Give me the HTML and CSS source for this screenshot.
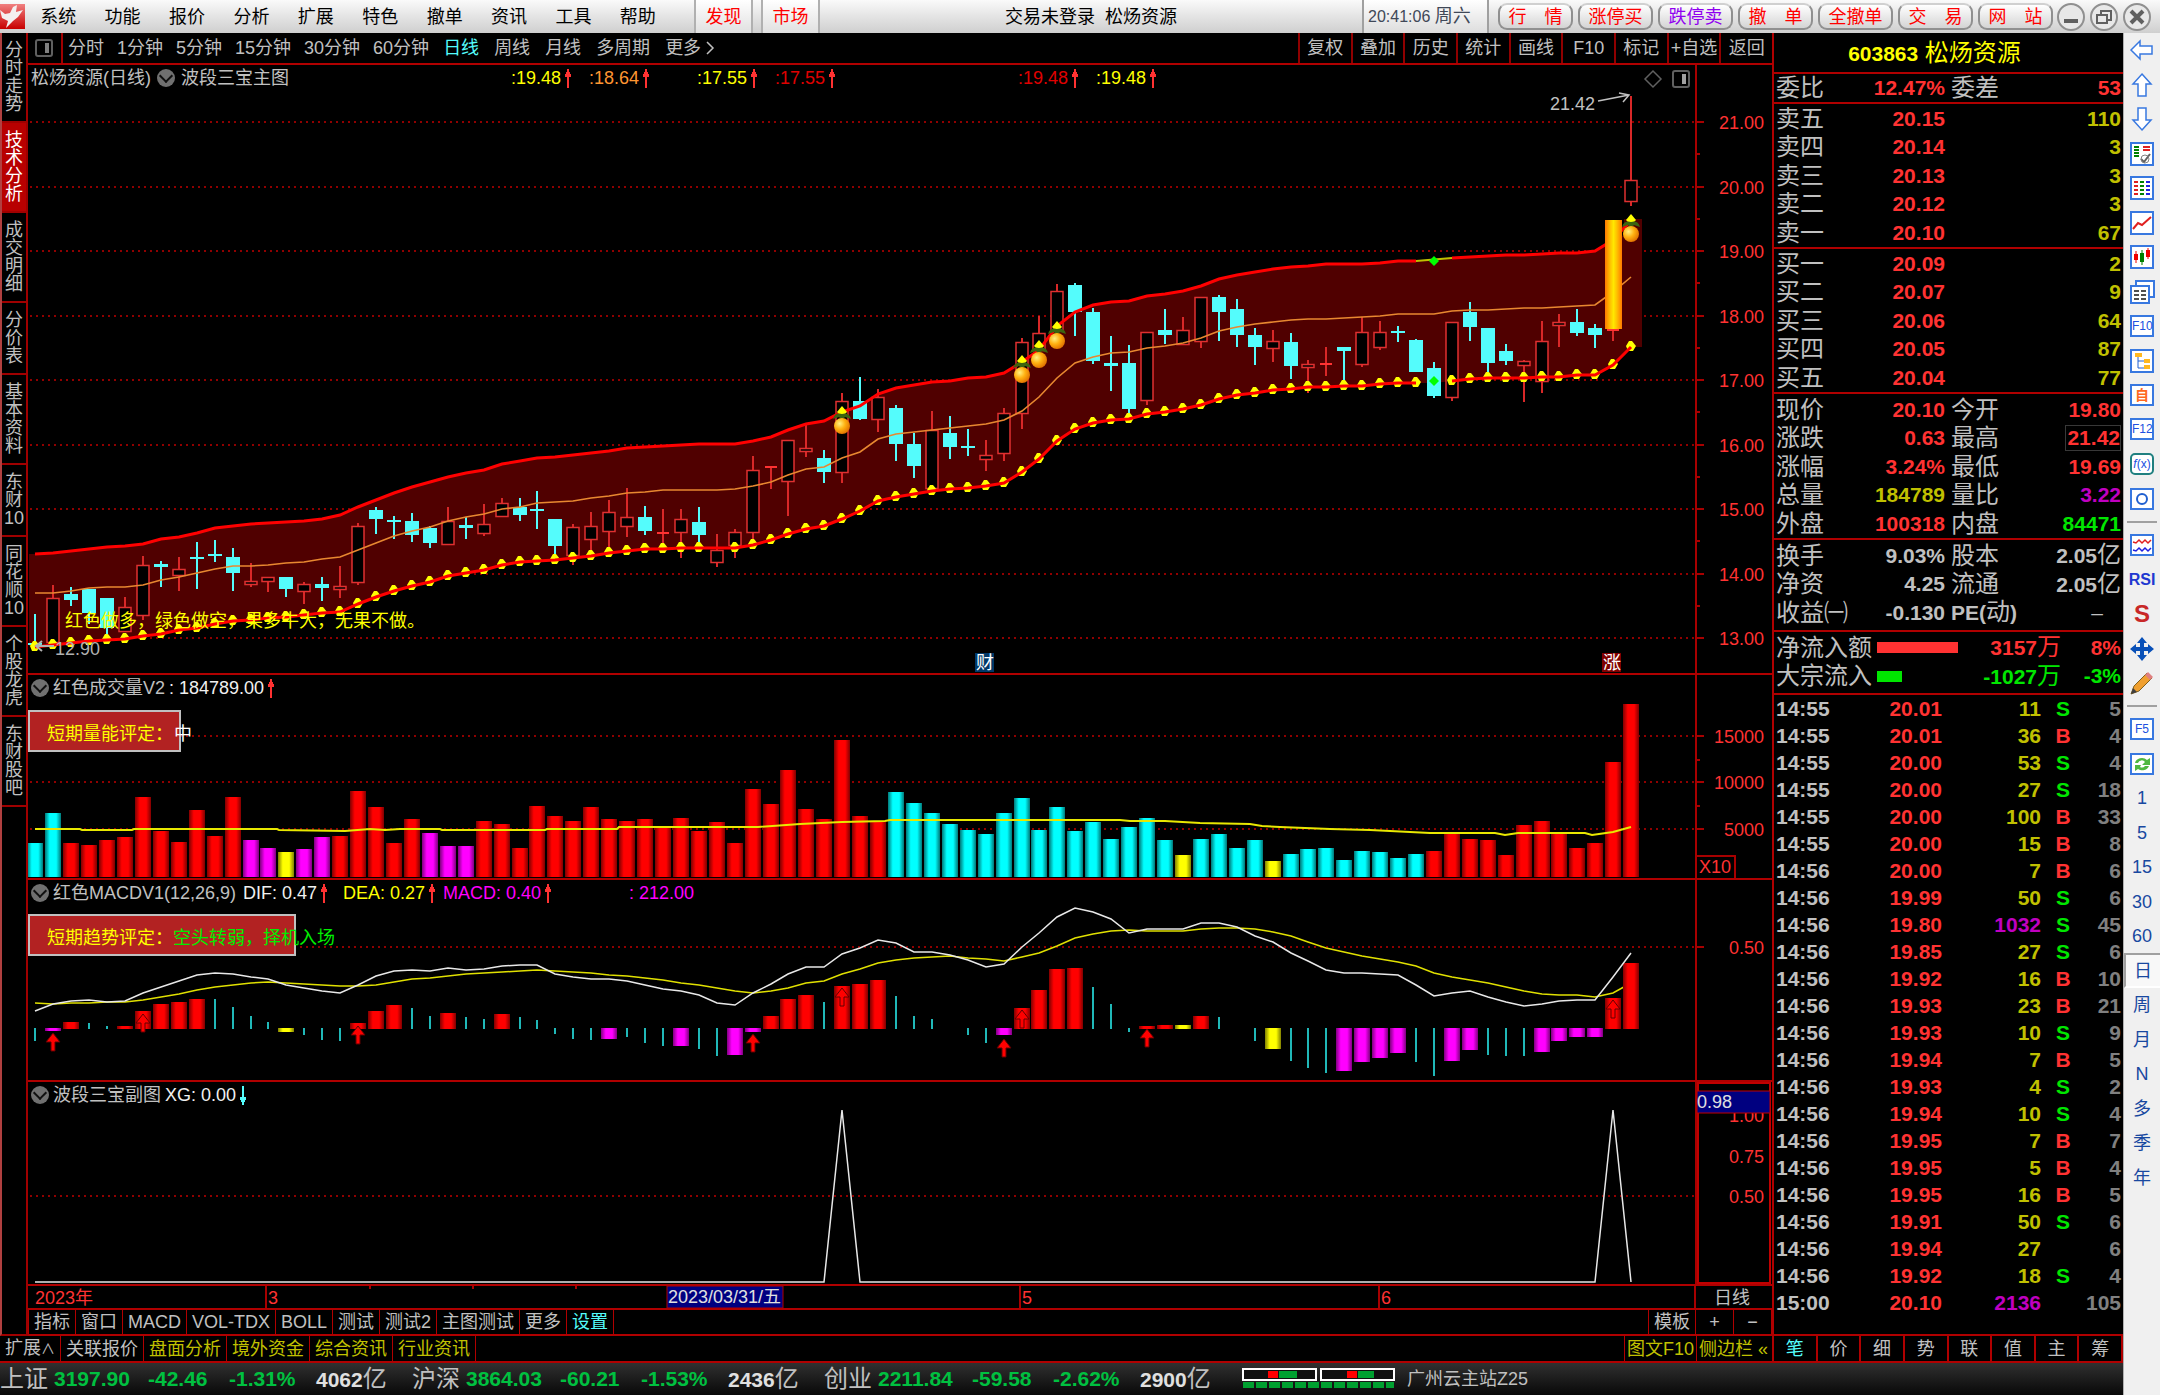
FILE: index.html
```html
<!DOCTYPE html>
<html lang="zh-CN">
<head>
<meta charset="utf-8">
<title>松炀资源 603863</title>
<link rel="stylesheet" href="styles.css">
</head>
<body>
<header class="titlebar">
  <svg class="logo" viewBox="0 0 25 25"><defs><linearGradient id="lg" x1="0" y1="0" x2="0" y2="1"><stop offset="0" stop-color="#f08080"/><stop offset="1" stop-color="#c80000"/></linearGradient></defs><rect width="25" height="25" fill="url(#lg)"/><path d="M0 6 L5 10 L10 9 L13 3 L17 1 L16 8 L23 6 L18 13 L13 17 L6 24 L8 17 L2 14 Z" fill="#f4f0f0"/></svg>
  <nav class="menu">
    <button>系统</button><button>功能</button><button>报价</button><button>分析</button><button>扩展</button><button>特色</button><button>撤单</button><button>资讯</button><button>工具</button><button>帮助</button>
  </nav>
  <div class="hot"><button>发现</button><button>市场</button></div>
  <div class="caption">交易未登录&nbsp; 松炀资源</div>
  <div class="clock">20:41:06 <span>周六</span></div>
  <div class="pills">
    <button>行&emsp;情</button><button>涨停买</button><button class="violet">跌停卖</button><button>撤&emsp;单</button><button>全撤单</button><button>交&emsp;易</button><button>网&emsp;站</button>
  </div>
  <div class="winctl">
    <button aria-label="最小化"><svg viewBox="0 0 30 30"><circle cx="15" cy="15" r="13"/><path d="M8 19H22" stroke-width="4"/></svg></button>
    <button aria-label="还原"><svg viewBox="0 0 30 30"><circle cx="15" cy="15" r="13"/><path d="M12 12V9H22V18H19M8 13H18V21H8Z" stroke-width="2"/></svg></button>
    <button aria-label="关闭"><svg viewBox="0 0 30 30"><circle cx="15" cy="15" r="13"/><path d="M9 9L21 21M21 9L9 21" stroke-width="4"/></svg></button>
  </div>
</header>
<main class="work">
  <nav class="side">
    <button>分时走势</button><button class="on">技术分析</button><button>成交明细</button><button>分价表</button><button>基本资料</button><button>东财<br>10</button><button>同花顺<br>10</button><button>个股龙虎</button><button>东财股吧</button>
  </nav>
  <section class="chart">
    <div class="periods">
      <button class="split" aria-label="布局"><svg width="18" height="18" viewBox="0 0 18 18"><rect x="1" y="1" width="16" height="16" rx="2" fill="none" stroke="#606060" stroke-width="2"/><rect x="10" y="4" width="4" height="10" fill="#808080"/></svg></button>
      <div class="pgroup"><button>分时</button><button>1分钟</button><button>5分钟</button><button>15分钟</button><button>30分钟</button><button>60分钟</button></div>
      <div class="pgroup wide"><button class="cyan">日线</button><button>周线</button><button>月线</button><button>多周期</button><button>更多<svg class="chev" width="10" height="16" viewBox="0 0 10 16"><path d="M2 2L8 8L2 14" fill="none" stroke="#c0c0c0" stroke-width="1.5"/></svg></button></div>
      <div class="ptools"><button>复权</button><button>叠加</button><button>历史</button><button>统计</button><button>画线</button><button>F10</button><button>标记</button><button>+自选</button><button>返回</button></div>
    </div>
    <div class="panel">
      <svg id="main" viewBox="28 65 1744 608"></svg>
      <div class="legend head">
        <span>松炀资源(日线)</span><i class="drop"></i><span class="name">波段三宝主图</span>
        <span class="val yellow">:19.48<b class="up"></b></span><span class="val orange">:18.64<b class="up"></b></span>
        <span class="val yellow s">:17.55<b class="up"></b></span><span class="val dred">:17.55<b class="up"></b></span>
        <span class="val dred l">:19.48<b class="up"></b></span><span class="val yellow">:19.48<b class="up"></b></span>
      </div>
    </div>
    <div class="panel">
      <svg id="vol" viewBox="28 675 1744 203"></svg>
      <div class="legend"><i class="drop"></i><span>红色成交量V2</span><span class="white">: 184789.00<b class="up"></b></span></div>
    </div>
    <div class="panel">
      <svg id="macd" viewBox="28 880 1744 200"></svg>
      <div class="legend"><i class="drop"></i><span class="m1">红色MACDV1(12,26,9)</span><span class="m2 white">DIF: 0.47<b class="up"></b></span><span class="m2 yellow">DEA: 0.27<b class="up"></b></span><span class="m3 magenta">MACD: 0.40<b class="up"></b></span><span class="magenta">: 212.00</span></div>
    </div>
    <div class="panel">
      <svg id="xg" viewBox="28 1082 1744 202"></svg>
      <div class="legend"><i class="drop"></i><span>波段三宝副图</span><span class="white">XG: 0.00<b class="down"></b></span></div>
    </div>
    <div class="panel"><svg id="time" viewBox="28 1286 1744 22"></svg></div>
    <div class="inds">
      <button>指标</button><button>窗口</button><button>MACD</button><button>VOL-TDX</button><button>BOLL</button><button>测试</button><button>测试2</button><button>主图测试</button><button>更多</button><button class="cyan">设置</button>
      <span class="fill"></span><button class="tpl">模板</button><button class="pm">+</button><button class="pm">−</button>
    </div>
  </section>
  <div class="ext">
    <button>扩展<small>∧</small></button><button>关联报价</button><button class="oly">盘面分析</button><button class="oly">境外资金</button><button class="oly">综合资讯</button><button class="oly">行业资讯</button>
    <span class="fill"></span><button class="oly bare">图文F10</button><button class="oly last">侧边栏 «</button>
  </div>
  <aside class="quote">
    <h1><b>603863</b> 松炀资源</h1>
    <table class="q one"><colgroup><col class="c1"><col class="c2"><col class="c3"><col></colgroup><tr><th>委比</th><td class="r">12.47%</td><th>委差</th><td class="r">53</td></tr></table>
    <table class="q" id="asks"></table>
    <table class="q" id="bids"></table>
    <table class="q facts"><colgroup><col class="c1"><col class="c2"><col class="c3"><col></colgroup>
      <tr><th>现价</th><td class="r">20.10</td><th>今开</th><td class="r">19.80</td></tr>
      <tr><th>涨跌</th><td class="r">0.63</td><th>最高</th><td class="r"><span class="boxed">21.42</span></td></tr>
      <tr><th>涨幅</th><td class="r">3.24%</td><th>最低</th><td class="r">19.69</td></tr>
      <tr><th>总量</th><td class="y">184789</td><th>量比</th><td class="m">3.22</td></tr>
      <tr><th>外盘</th><td class="r">100318</th><th>内盘</th><td class="g">84471</td></tr></table>
    <table class="q shares"><colgroup><col class="c1"><col class="c2"><col class="c3"><col></colgroup>
      <tr><th>换手</th><td>9.03%</td><th>股本</th><td>2.05<span>亿</span></td></tr>
      <tr><th>净资</th><td>4.25</td><th>流通</th><td>2.05<span>亿</span></td></tr>
      <tr><th>收益㈠</th><td>-0.130</td><th><b>PE(</b>动<b>)</b></th><td class="dash">–</td></tr></table>
    <table class="q flow"><colgroup><col class="f1"><col class="f2"><col class="f3"><col></colgroup>
      <tr><th>净流入额</th><td><i class="bar in" style="width:81px"></i></td><td class="r">3157<span>万</span></td><td class="r">8%</td></tr>
      <tr><th>大宗流入</th><td><i class="bar out" style="width:25px"></i></td><td class="g">-1027<span>万</span></td><td class="g">-3%</td></tr></table>
    <table class="ticks" id="ticks"></table>
    <div class="qtabs"><button class="cyan">笔</button><button>价</button><button>细</button><button>势</button><button>联</button><button>值</button><button>主</button><button>筹</button></div>
  </aside>
  <nav class="tools">
    <div class="tgroup">
      <button aria-label="后退"><svg viewBox="0 0 26 26"><path d="M2 13L11 4V9H23V17H11V22Z" class="ol"/></svg></button>
      <button aria-label="上"><svg viewBox="0 0 26 26"><path d="M13 2L22 12H17V24H9V12H4Z" class="ol"/></svg></button>
      <button aria-label="下"><svg viewBox="0 0 26 26"><path d="M13 24L22 14H17V2H9V14H4Z" class="ol"/></svg></button>
      <button aria-label="选股"><svg viewBox="0 0 26 26"><rect class="fr" x="2" y="2" width="22" height="22"/><path d="M5 6H10M5 9H10M5 12H10M5 15H10" stroke="#008000" stroke-width="2"/><path d="M14 6H21M14 9H21" stroke="#e02020" stroke-width="2"/><path d="M12 18L15 21L21 13" stroke="#606060" stroke-width="2" fill="none"/><circle cx="16" cy="18" r="4" fill="none" stroke="#808080"/></svg></button>
      <button aria-label="报价"><svg viewBox="0 0 26 26"><rect class="fr" x="2" y="2" width="22" height="22"/><path d="M5 7H9M5 11H9M5 15H9M5 19H9" stroke="#e02020" stroke-width="2"/><path d="M11 7H15M11 11H15M11 15H15M11 19H15" stroke="#008000" stroke-width="2"/><path d="M17 7H21M17 11H21M17 15H21M17 19H21" stroke="#2020e0" stroke-width="2"/></svg></button>
      <button aria-label="走势"><svg viewBox="0 0 26 26"><rect class="fr" x="2" y="2" width="22" height="22"/><path d="M4 19L9 13L13 15L22 7" stroke="#e02020" stroke-width="2" fill="none"/></svg></button>
      <button aria-label="K线"><svg viewBox="0 0 26 26"><rect class="fr" x="2" y="2" width="22" height="22"/><path d="M7 7V19M19 4V15" stroke="#f00000"/><path d="M13 6V21" stroke="#008000"/><rect x="5" y="10" width="4" height="6" fill="#f00000"/><rect x="11" y="9" width="4" height="9" fill="#008000"/><rect x="17" y="6" width="4" height="7" fill="#f00000"/></svg></button>
      <button aria-label="多窗"><svg viewBox="0 0 26 26"><rect class="fr" x="7" y="2" width="18" height="16"/><rect class="fr" x="2" y="7" width="18" height="17"/><path d="M5 12H10M5 16H10M5 20H10M12 12H17M12 16H17M12 20H17" stroke="#505050" stroke-width="2"/></svg></button>
      <button class="frame">F10</button>
      <button aria-label="结构"><svg viewBox="0 0 26 26"><rect class="fr" x="2" y="2" width="22" height="22"/><path d="M9 8V20H16M9 13H16" stroke="#2060d0" fill="none"/><rect x="6" y="5" width="7" height="4" fill="#ffb820"/><rect x="15" y="11" width="6" height="4" fill="#ffb820"/><rect x="15" y="17" width="6" height="4" fill="#ffb820"/></svg></button>
      <button class="frame orange2">自</button>
      <button class="frame">F12</button>
      <button class="frame fx"><i>f</i>(x)</button>
      <button aria-label="圈"><svg viewBox="0 0 26 26"><rect class="fr" x="2" y="3" width="22" height="20"/><circle cx="13" cy="13" r="5" fill="none" stroke="#2060d0" stroke-width="2"/></svg></button>
    </div>
    <hr>
    <div class="tgroup">
      <button aria-label="曲线"><svg viewBox="0 0 26 26"><rect class="fr" x="2" y="3" width="22" height="20"/><path d="M4 10L7 11L10 8L13 11L16 8L19 11L22 8" stroke="#e02020" fill="none" stroke-width="1.5"/><path d="M4 18L7 19L10 16L13 19L16 16L19 19L22 16" stroke="#2020e0" fill="none" stroke-width="1.5"/></svg></button>
      <button class="rsi">RSI</button>
      <button class="ess">S</button>
      <button aria-label="移动"><svg viewBox="0 0 26 26"><path d="M13 1L18 7H15V11H19V8L25 13L19 18V15H15V19H18L13 25L8 19H11V15H7V18L1 13L7 8V11H11V7H8Z" fill="#0850b8"/></svg></button>
      <button aria-label="画笔"><svg viewBox="0 0 26 26"><path d="M2 24L5 16L18 3L23 8L10 21Z" fill="#f0a030" stroke="#806020"/><path d="M16 5L21 10L24 7L19 2Z" fill="#e08080"/><path d="M2 24L4 18L8 22Z" fill="#404040"/></svg></button>
    </div>
    <hr>
    <div class="tgroup">
      <button class="frame">F5</button>
      <button aria-label="刷新"><svg viewBox="0 0 26 26"><rect class="fr" x="2" y="3" width="22" height="20"/><path d="M6 12A7 6 0 0 1 18 9L21 7V14H13L16 11A4 4 0 0 0 9 12Z M20 15A7 6 0 0 1 9 18L6 20V14H12L11 16A4 4 0 0 0 16 15Z" fill="#50b840"/></svg></button>
      <button>1</button><button>5</button><button>15</button><button>30</button><button>60</button><button class="press">日</button><button>周</button><button>月</button><button>N</button><button>多</button><button>季</button><button>年</button>
    </div>
  </nav>
  <footer class="status" id="status"></footer>
</main>
<script src="app.js"></script>
</body>
</html>
```
FILE: styles.css
```css
*{box-sizing:border-box}
body{margin:0;min-height:100vh;display:flex;flex-direction:column;background:#000;color:#c0c0c0;font:18px/20px "Liberation Sans","Noto Sans CJK SC",sans-serif}
button{margin:0;padding:0;border:0;background:none;color:inherit;font:inherit;white-space:nowrap}
svg{display:block}
.cyan{color:#54fcfc}.yellow{color:#ff0}.orange{color:#ff9632}.dred{color:#e00000}.white{color:#f0f0f0}.magenta{color:#f0f}.oly{color:#c0c000}
.titlebar{height:33px;display:flex;align-items:center;color:#000;background:linear-gradient(#fafafa,#e4e4e4 50%,#cfcfcf)}
.logo{width:25px;height:25px;margin-right:1px}
.menu{display:flex;width:644px;margin-right:24px}
.menu button{flex:1}
.hot{display:flex;gap:8px;height:33px}
.hot button{width:59px;color:#f00;border-left:2px solid #b0b0b0;border-right:2px solid #b0b0b0;background:linear-gradient(#fff,#e0e0e0)}
.caption{flex:1;text-align:center}
.clock{width:127px;height:33px;padding-left:4px;line-height:33px;font-size:16px;color:#404858;border-left:2px solid #a0a0a0;border-right:2px solid #a0a0a0;background:linear-gradient(#fff,#ddd)}
.clock span{font-size:18px}
.pills{display:flex;gap:5px;margin-left:9px}
.pills button{width:75px;height:27px;border-radius:9px;border:2px solid #909090;border-top-color:#d0d0d0;color:#f00;line-height:22px;background:linear-gradient(#fff,#d4d4d4)}
.pills .violet{color:#9000f0}
.winctl{display:flex;gap:3px;margin:0 8px 0 3px}
.winctl svg{width:30px;height:30px;fill:#e8e8e8;stroke:#606060}
.winctl circle{stroke:#909090;stroke-width:2}
.work{flex:1;display:grid;grid-template-columns:28px 1fr 351px 37px;grid-template-rows:auto auto 1fr;grid-template-areas:"side chart quote tools" "ext ext quote tools" "status status status tools"}
.side{grid-area:side;display:flex;flex-direction:column;border-left:2px solid #b04040;border-right:2px solid #a00000;border-bottom:2px solid #a00000}
.side button{padding:8px 2px;border-bottom:2px solid #a00000;line-height:18px;white-space:normal}
.side .on{background:#b80000;color:#fff}
.chart{grid-area:chart;min-width:0}
.periods{display:flex;height:32px;border-bottom:2px solid #b00000}
.split{width:35px;padding-left:7px;border-right:2px solid #a00000}
.pgroup{display:flex;gap:13px;padding-left:5px}
.pgroup.wide{gap:15px;padding-left:14px}
.chev{display:inline-block;vertical-align:-2px;margin-left:4px}
.ptools{display:flex;width:474px;margin-left:auto}
.ptools button{flex:1;width:0;min-width:0;display:flex;align-items:center;justify-content:center;border-left:2px solid #900000}
.panel{position:relative;border-bottom:2px solid #b00000}
.panel svg{width:100%;height:auto}
.legend{position:absolute;left:3px;top:2px;display:flex;align-items:center;gap:4px;height:22px;white-space:nowrap}
.legend.head{gap:6px}
.drop{width:18px;height:18px;border-radius:50%;background:#707070;display:grid;place-items:center}
.drop::after{content:"";width:8px;height:8px;margin-top:-4px;border:solid #101010;border-width:0 2px 2px 0;transform:rotate(45deg)}
.name{width:324px}
.val{width:72px}
.val.s{margin-left:30px}.val.l{margin-left:165px}
.up,.down{display:inline-block;width:8px;height:19px;margin-left:3px;vertical-align:-4px;background:linear-gradient(#ff3232,#ff3232) center/2px 100% no-repeat,conic-gradient(from 155deg at 50% 0,#ff3232 50deg,transparent 0) top/8px 8px no-repeat}
.down{background:linear-gradient(#54fcfc,#54fcfc) center/2px 100% no-repeat,conic-gradient(from -25deg at 50% 100%,#54fcfc 50deg,transparent 0) bottom/8px 8px no-repeat}
.m1{width:186px}.m2{width:96px}.m3{width:182px}
.inds,.ext{display:flex;height:26px;border-bottom:2px solid #b00000}
.ext{grid-area:ext;height:27px}
.ext small{font-size:14px}
.inds button,.ext button{padding:0 5px;border-right:1px solid #b00000}
.inds button:first-child{border-left:1px solid #b00000}
.fill{flex:1}
.inds .tpl{border-left:1px solid #b00000}
.inds .pm{width:38px}
.ext .bare{border-left:1px solid #b00000;padding:0 2px}
.ext .last{border:0;padding:0 0 0 2px;width:75px;text-align:left}
.quote{grid-area:quote;display:flex;flex-direction:column;border-left:2px solid #b00000}
.quote h1{margin:0;height:39px;padding-right:28px;line-height:39px;text-align:center;font-size:24px;font-weight:400;color:#ff0}
.quote h1 b{font-size:21px}
.q{width:100%;table-layout:fixed;border-collapse:separate;border-spacing:0;border-top:2px solid #b00000}
.q td,.q th{padding:0;height:29px;line-height:26px;white-space:nowrap}
.q tr:nth-child(even) td,.q tr:nth-child(even) th,.q.one td{height:28px}
.q.one th{height:28px}
.q th{padding-left:2px;text-align:left;font-size:24px;font-weight:400}
.q th+td+th{padding-left:6px}
.q th b{font-size:21px}
.q td{text-align:right;font-size:21px;font-weight:700}
.q td:last-child{padding-right:2px}
.q td span{font-size:24px;font-weight:400}
.q td span.boxed{display:block;margin-left:40px;border:1px solid #383838;font-size:21px;font-weight:700;line-height:24px}
.facts{padding-top:1px}
.shares{padding:1px 0 3px}
.c1{width:96px}.c2{width:75px}.c3{width:80px}
.f1{width:103px}.f2{width:82px}.f3{width:102px}
.r{color:#ff3232}.y{color:#c0c000}.g{color:#00e600}.m{color:#c000c0}.w{color:#808080}
.q td.dash{padding-right:20px;font-weight:400}
.bar{display:block;height:11px}
.in{background:#ff3232}.out{background:#00e600}
.flow{padding:1px 0 3px}
.ticks{width:100%;table-layout:fixed;border-collapse:separate;border-spacing:0;border-top:2px solid #b00000;font-size:21px;font-weight:700}
.ticks td{padding:0;height:27px;line-height:25px;text-align:right}
.ticks td:first-child{padding-left:2px;text-align:left}
.ticks td:nth-child(4){text-align:center}
.ticks td:last-child{padding-right:2px}
.qtabs{display:flex;height:29px;margin-top:auto;border-top:2px solid #b00000;border-bottom:2px solid #b00000}
.qtabs button{flex:1;border-right:2px solid #b00000}
.tools{grid-area:tools;background:#f0f0f0;color:#1848a0;border-left:1px solid #b0b0b0}
.tools hr{margin:5px 3px;border:0;border-top:2px solid #a0a0a0}
.tgroup{display:flex;flex-direction:column;align-items:center}
.tgroup button{width:36px;height:34px;display:grid;place-items:center}
.tgroup button:nth-child(even){height:35px}
.tgroup svg{width:26px;height:26px}
.ol{fill:#fff;stroke:#3878e0;stroke-width:1.5}
.fr{fill:#fff;stroke:#3878e0;stroke-width:2}
.tgroup .frame{width:24px;height:22px;margin:6px 0;border:2px solid #3878e0;background:#fff;font-size:12px;color:#2050e0;line-height:18px}
.tgroup .frame:nth-child(even){height:22px;margin:6px 0 7px}
.tgroup .orange2{color:#ff6820;font-size:14px;font-weight:700}
.tgroup .fx{border-color:#208080;border-radius:5px;display:flex;justify-content:center}
.tgroup .rsi{font-size:16px;font-weight:700;color:#2038d0}
.tgroup .ess{font-size:24px;font-weight:700;color:#c82828}
.tgroup .press{border:2px solid #a0a0a0;border-right:0;border-bottom-color:#fff;background:#f8f8f8}
.status{grid-area:status;display:flex;align-items:center;height:32px;background:linear-gradient(#303030,#080808);font-size:21px;font-weight:700;white-space:nowrap}
.status .n{width:54px;font-size:24px;font-weight:400}
.status .i{width:94px}.status .c{width:81px}.status .p{width:87px}.status .a{width:96px;color:#e0e0e0}
.status .a span{font-size:24px;font-weight:400;color:#c0c0c0}
.status .up2{color:#00c040}
.status .host{margin-left:12px;font-size:18px;font-weight:400}
.status svg{margin-left:6px}
text{font-size:18px}
.ax{fill:#ff3232;text-anchor:end}
```
FILE: app.js
```javascript
const X = i => Math.round(35.4 + 17.93 * i);
const at = (y, list) => list.map((v, i) => X(i) + ',' + (v + y)).join(' ');
const rect = (x, y, w, h, a) => `<rect x="${x}" y="${y}" width="${w}" height="${h}" ${a}/>`;
const line = (x1, y1, x2, y2, a) => `<path d="M${x1} ${y1}L${x2} ${y2}" ${a}/>`;
const grid = ys => ys.map(y => line(30, y, 1695, y, 'stroke="#900000" stroke-width="2" stroke-dasharray="2 4" fill="none"')).join('');
const axis = (top, h) => rect(1695, top, 2, h, 'fill="#a80000"');
const tick = (y, w) => rect(1697, y - 1, w, 2, 'fill="#a80000"');
const label = (y, s) => `<text x="1764" y="${y + 7}" class="ax">${s}</text>`;

// Candles: kind, high, body top, body bottom, low
const K = `c 614 643 645 645|r 585 598 642 642|c 587 594 600 606|c 589 589 613 624|c 598 598 628 637|r 597 607 631 631|r 556 565 615 620|c 561 564 567 587|r 557 569 575 591|c 542 557 558 589|c 540 554 556 562|c 548 557 573 591|r 563 581 584 587|r 577 577 581 592|c 577 577 589 597|r 582 584 591 604|c 577 584 588 601|r 566 586 589 598|r 523 526 582 585|c 507 510 519 534|c 516 520 521 539|c 513 521 535 542|c 526 528 543 548|r 507 521 544 544|c 517 525 528 539|r 504 524 533 536|r 498 503 516 517|c 498 507 515 521|c 491 509 510 529|c 519 519 546 557|r 524 527 555 565|r 512 526 539 552|r 500 512 531 550|r 488 517 526 537|c 506 517 531 535|r 509 532 532 547|r 509 519 532 558|c 507 522 535 545|r 534 550 562 567|r 529 532 545 558|r 456 470 532 549|r 466 466 466 489|r 440 440 481 516|r 425 448 451 457|c 450 458 472 483|r 393 401 472 483|c 377 401 419 420|r 389 397 419 432|c 405 408 444 461|c 433 444 466 478|r 411 430 488 488|c 416 433 447 459|c 429 446 447 456|r 440 455 459 471|r 408 413 453 461|r 338 342 413 429|r 316 333 350 352|r 284 291 330 335|c 283 285 312 336|c 308 312 361 364|c 336 363 366 391|c 345 363 409 413|r 332 332 400 405|c 309 330 335 344|r 317 330 344 345|r 297 297 341 348|c 295 297 312 341|c 299 309 335 347|c 328 335 347 365|r 330 341 348 362|c 333 342 366 379|r 360 364 367 393|r 347 363 363 376|c 347 347 351 384|r 317 332 364 367|r 321 332 347 350|c 326 331 332 342|c 339 340 372 372|c 362 368 396 398|r 322 322 397 401|c 302 312 327 341|c 328 328 363 373|c 344 351 361 365|r 360 361 365 402|r 321 341 381 393|r 314 322 325 347|c 309 322 333 336|c 324 328 335 348|r 322 329 329 341|r 96 180 201 206`.split('|').map(s => s.split(' '));
const LOW = [645,643,641,639,638,637,634,632,628,626,622,619,618,616,615,613,611,610,602,595,589,584,580,574,571,568,563,560,559,558,556,554,551,549,547,547,546,546,546,546,543,538,532,527,524,517,509,499,495,492,489,487,486,484,481,470,457,439,427,421,418,417,412,410,407,403,397,393,391,388,387,385,385,384,384,382,381,381,381,379,377,376,376,376,375,375,373,373,363,345];
const UP = [554,553,551,549,547,546,544,539,537,533,528,526,524,523,522,521,519,515,507,500,493,487,482,477,473,470,464,461,458,457,455,453,451,448,447,446,445,444,444,444,441,437,430,424,421,412,406,394,388,385,382,381,378,377,373,362,350,326,312,305,302,301,296,294,291,286,279,275,272,269,267,266,264,264,264,263,261,261,261,258,257,256,255,255,254,253,253,251,240,220];
const MID = [593,593,591,588,587,587,585,580,577,573,569,566,566,565,563,562,559,557,550,543,536,531,527,521,517,514,509,507,503,502,501,498,496,493,492,490,490,490,490,489,486,482,475,469,467,458,452,439,434,432,430,428,426,424,420,411,397,378,363,357,353,352,348,346,343,338,331,327,324,322,320,319,319,318,317,316,314,314,314,311,310,310,309,308,308,307,306,305,292,277];

function drawMain() {
  let s = `<defs><linearGradient id="gold"><stop offset="0" stop-color="#ff7800"/><stop offset=".3" stop-color="#ffc000"/><stop offset=".5" stop-color="#ffe800"/><stop offset=".7" stop-color="#ffc000"/><stop offset="1" stop-color="#ff7800"/></linearGradient>
  <radialGradient id="org" cx=".35" cy=".35" r=".7"><stop offset="0" stop-color="#fff080"/><stop offset=".5" stop-color="#ffb010"/><stop offset="1" stop-color="#e07000"/></radialGradient>
  <g id="fruit"><path d="M-5 -14L0 -20L5 -14L3 -12H-3Z" fill="#ff0"/><path d="M-9 -7Q-7 -14 0 -12Q7 -14 9 -7L3 -9L0 -6L-3 -9Z" fill="#3c6410"/><circle r="8" fill="url(#org)"/></g></defs>`;
  s += grid([122, 187, 251, 316, 380, 445, 509, 574, 638]);
  s += `<polygon points="29,554 ${at(0, UP.slice(0, 89))} 1624,235 1624,219 1642,219 1642,347 1630,347 ${LOW.map((v, i) => X(i) + ',' + (v + 2)).slice(0, 89).reverse().join(' ')} 29,646" fill="#500000"/>`;
  K.forEach(([k, h, t, b, l], i) => {
    const x = X(i), col = k === 'c' ? '#54fcfc' : '#ff3232';
    s += rect(x - 1, h, 2, l - h, `fill="${k === 'c' ? col : '#d82828'}"`);
    if (k === 'c') s += rect(x - 7, t, 14, Math.max(2, b - t), `fill="${col}"`);
    else if (b - t < 3) s += rect(x - 6, t, 12, 2, `fill="${col}"`);
    else s += rect(x - 6, +t + .5, 12, b - t, `fill="#000" stroke="#e03030" stroke-width="1.5"`);
  });
  s += `<polyline points="${at(0, MID)}" fill="none" stroke="#e88830" stroke-width="1.6"/>`;
  s += LOW.map((v, i) => i === 78 || i === 38 ? '' : `<path d="M${X(i) - 5} ${v + 1}L${X(i) - 2} ${v - 4}H${X(i) + 1}L${X(i) + 5} ${v + 1}L${X(i) + 2} ${v + 6}H${X(i) - 3}Z" fill="#ff0"/>`).join('');
  const seg = (a, f, t, d) => `<polyline points="${a.map((v, i) => X(i) + ',' + (v + d)).slice(f, t).join(' ')}" fill="none" stroke="#f00" stroke-width="3"/>`;
  s += seg(LOW, 0, 78, 2) + seg(LOW, 79, 90, 2) + seg(UP, 0, 78, 0) + seg(UP, 79, 90, 0);
  s += line(X(77), 261, X(79), 258, 'stroke="#c0c000" stroke-width="2"');
  [261, 381].forEach(y => s += `<path d="M${X(78) - 5} ${y}L${X(78)} ${y - 5}L${X(78) + 5} ${y}L${X(78)} ${y + 5}Z" fill="#0f0"/>`);
  s += rect(1605, 220, 17, 109, 'fill="url(#gold)"');
  [[45, 426], [55, 375], [56, 360], [57, 341], [89, 234]].forEach(([i, y]) => s += `<use href="#fruit" x="${X(i)}" y="${y}"/>`);
  s += '<text x="65" y="627" fill="#ff0">红色做多，绿色做空，果多牛大，无果不做。</text>';
  s += '<text x="55" y="655" fill="#b0b0b0">12.90</text><path d="M54 646H36M42 641L36 646L42 651" stroke="#b0b0b0" stroke-width="2" fill="none"/>';
  s += '<text x="1550" y="110" fill="#c0c0c0">21.42</text><path d="M1598 101L1629 95M1619 93L1629 95L1623 102" stroke="#c0c0c0" stroke-width="1.5" fill="none"/>';
  s += '<path d="M1653 71L1661 79L1653 87L1645 79Z" fill="none" stroke="#606060" stroke-width="1.5"/>' + rect(1673, 71, 16, 16, 'rx="2" fill="none" stroke="#606060" stroke-width="2"') + rect(1682, 74, 4, 10, 'fill="#a0a0a0"');
  s += rect(975, 653, 19, 19, 'fill="#003868"') + '<text x="976" y="669" fill="#fff">财</text>' + rect(1602, 653, 19, 19, 'fill="#800000"') + '<text x="1603" y="669" fill="#fff">涨</text>';
  s += axis(65, 608);
  for (let p = 0; p < 9; p++) { const y = Math.round(122.3 + p * 64.5); s += tick(y, 7) + label(y, (21 - p) + '.00'); if (p < 8) s += tick(y + 32, 3); }
  document.getElementById('main').innerHTML = s;
}

const COL = { r: '#ff0000', c: '#00ffff', m: '#ff00ff', y: '#ffff00' };
const DRK = { r: '#800000', c: '#007878', m: '#800080', y: '#808000' };
const grads = p => '<defs>' + Object.keys(COL).map(k => `<linearGradient id="${p + k}"><stop offset="0" stop-color="${DRK[k]}"/><stop offset=".3" stop-color="${COL[k]}"/><stop offset=".7" stop-color="${COL[k]}"/><stop offset="1" stop-color="${DRK[k]}"/></linearGradient>`).join('') + '</defs>';

const V = 'c843 c813 r843 r845 r840 r837 r797 r831 r842 r810 r836 r797 m840 m848 y852 m849 m837 r836 r791 r807 r843 r819 m833 m846 m846 r821 r824 r848 r806 r816 r821 r807 r819 r821 r819 r828 r818 r831 r822 r843 r789 r804 r770 r809 r819 r740 r816 r822 c792 c803 c813 c824 c830 c834 c813 c798 c830 c807 c831 c822 c839 c827 c818 c840 y855 c839 c834 c848 c840 y861 c854 c849 c848 c860 c851 c852 c858 c854 r851 r834 r839 r840 r855 r825 r821 r833 r848 r843 r762 r704'.split(' ');
function drawVol() {
  let s = grads('v') + grid([736, 782, 829]);
  V.forEach((v, i) => { const y = +v.slice(1); s += rect(X(i) - 8, y, 16, 877 - y, `fill="url(#v${v[0]})"`); });
  s += '<polyline fill="none" stroke="#e8e800" stroke-width="2" points="35,829 80,829 82,830 132,830 134,829 277,829 279,830 345,831 370,829 385,830 400,829 440,829 442,830 545,830 547,829 617,829 619,827 758,827 800,824 842,822 885,821 890,820 1120,820 1130,821 1165,821 1200,823 1250,824 1262,826 1280,827 1330,829 1370,830 1410,832 1430,833 1495,833 1505,835 1518,833 1585,833 1592,835 1613,832 1631,827"/>';
  s += rect(29, 711, 151, 40, 'fill="#b22222" stroke="#c0c0c0" stroke-width="2"') + '<text x="47" y="740" fill="#ff0">短期量能评定：</text><text x="174" y="740" fill="#fff">中</text>';
  s += axis(675, 203) + tick(736, 7) + tick(760, 3) + tick(782, 7) + tick(806, 3) + tick(829, 7) + label(736, '15000') + label(782, '10000') + label(829, '5000');
  s += '<path d="M1697 856H1735V878" fill="none" stroke="#a80000" stroke-width="2"/><text x="1699" y="873" fill="#ff3232">X10</text>';
  document.getElementById('vol').innerHTML = s;
}

const M = 's1041 m1031 r1022 s1023 s1026 r1026 r1011 r1004 r1002 r999 s999 s1007 s1016 s1022 y1032 s1035 s1040 s1041 r1023 r1011 r1005 s1008 s1016 r1013 s1017 s1019 r1014 s1017 s1020 s1034 s1039 s1040 m1039 s1037 s1043 s1046 m1046 s1049 s1056 m1055 m1032 r1016 r999 r995 s1002 r986 r984 r980 s996 s1016 s1019 - s1035 s1043 m1035 r1008 r990 r969 r968 s987 s1004 s1032 r1026 r1025 y1025 r1016 s1017 - s1041 y1049 s1061 s1068 s1073 m1071 m1062 m1058 m1053 s1062 s1076 m1061 m1050 s1055 s1056 s1056 m1052 m1041 m1037 m1037 r998 r963'.split(' ');
const DIF = [1011,1004,1001,1000,1002,1001,993,987,981,975,973,974,977,979,985,988,991,993,985,976,971,970,971,968,970,969,966,965,965,974,977,979,979,981,985,989,991,995,1003,1005,993,984,974,967,967,954,948,940,943,952,952,955,960,967,964,947,933,917,908,912,919,933,929,929,929,923,923,927,936,942,953,961,970,973,973,974,975,985,996,993,991,997,1002,1006,1004,1001,1000,1000,977,953];
const DEA = [1003,1004,1003,1003,1002,1002,1000,997,994,990,987,985,983,982,983,984,985,986,986,985,982,979,978,976,974,973,972,971,970,971,972,973,975,976,978,980,983,985,988,991,993,991,988,983,981,974,969,963,960,958,957,956,958,959,961,957,953,946,938,934,931,930,931,931,931,929,928,928,929,932,936,942,948,952,956,959,962,966,973,977,980,983,987,991,994,995,995,997,993,983];
function drawMacd() {
  let s = grads('m') + grid([947]);
  s += `<polyline points="${at(0, DEA)}" fill="none" stroke="#e0e000" stroke-width="1.5"/>`;
  M.forEach((v, i) => {
    if (v === '-') return;
    const y = +v.slice(1), up = y < 1028, top = up ? y : 1028, h = up ? 1029 - y : y - 1028;
    s += v[0] === 's' ? rect(X(i) - 1, top, 2, h, 'fill="#20b8b8"') : rect(X(i) - 8, top, 16, h, `fill="url(#m${v[0]})"`);
  });
  s += `<polyline points="${at(0, DIF)}" fill="none" stroke="#e8e8e8" stroke-width="1.5"/>`;
  [[1, 1033], [6, 1014], [18, 1026], [40, 1034], [45, 988], [54, 1039], [55, 1010], [62, 1029], [88, 1000]].forEach(([i, y]) => s += `<path transform="translate(${X(i)} ${y})" d="M0 0L7 9H2V18H-2V9H-7Z" fill="#f00" stroke="#600000"/>`);
  s += rect(29, 915, 266, 40, 'fill="#b22222" stroke="#c0c0c0" stroke-width="2"') + '<text x="47" y="944" fill="#ff0">短期趋势评定：</text><text x="173" y="944" fill="#0e0">空头转弱，择机入场</text>';
  s += axis(880, 200) + tick(947, 7) + label(947, '0.50');
  document.getElementById('macd').innerHTML = s;
}

function drawXg() {
  let s = grid([1196]) + '<path d="M35 1282H824L842 1110L860 1282H1595L1613 1110L1631 1282" fill="none" stroke="#e8e8e8" stroke-width="1.5"/>';
  s += axis(1082, 202) + label(1115, '1.00') + label(1156, '0.75') + label(1196, '0.50') + rect(1698, 1083, 72, 200, 'fill="none" stroke="#c00000" stroke-width="2"') + rect(1697, 1091, 73, 22, 'fill="#000080" stroke="#c00000"') + '<text x="1697" y="1108" fill="#e0e0e0">0.98</text>';
  document.getElementById('xg').innerHTML = s;
}

function drawTime() {
  const r = 'fill="#ff3232"';
  let s = `<text x="35" y="1304" ${r}>2023年</text><text x="268" y="1304" ${r}>3</text><text x="1022" y="1304" ${r}>5</text><text x="1381" y="1304" ${r}>6</text>`;
  [266, 1020, 1379, 1695].forEach(x => s += rect(x - 1, 1286, 2, 22, 'fill="#a80000"'));
  [369, 472, 575].forEach(x => s += rect(x, 1286, 2, 3, 'fill="#a80000"'));
  s += rect(667, 1286, 116, 22, 'fill="#000080" stroke="#b00000"') + '<text x="668" y="1303" fill="#e0e0e0">2023/03/31/五</text><text x="1714" y="1304" fill="#c0c0c0">日线</text>';
  document.getElementById('time').innerHTML = s;
}

const book = (id, rows) => document.getElementById(id).innerHTML = '<colgroup><col class="c1"><col class="c2"><col></colgroup>' + rows.map(([a, b, c]) => `<tr><th>${a}</th><td class="r">${b}</td><td class="y">${c}</td></tr>`).join('');
book('asks', [['卖五', '20.15', 110], ['卖四', '20.14', 3], ['卖三', '20.13', 3], ['卖二', '20.12', 3], ['卖一', '20.10', 67]]);
book('bids', [['买一', '20.09', 2], ['买二', '20.07', 9], ['买三', '20.06', 64], ['买四', '20.05', 87], ['买五', '20.04', 77]]);

const T = `14:55 20.01 11 S 5|14:55 20.01 36 B 4|14:55 20.00 53 S 4|14:55 20.00 27 S 18|14:55 20.00 100 B 33|14:55 20.00 15 B 8|14:56 20.00 7 B 6|14:56 19.99 50 S 6|14:56 19.80 1032 S 45|14:56 19.85 27 S 6|14:56 19.92 16 B 10|14:56 19.93 23 B 21|14:56 19.93 10 S 9|14:56 19.94 7 B 5|14:56 19.93 4 S 2|14:56 19.94 10 S 4|14:56 19.95 7 B 7|14:56 19.95 5 B 4|14:56 19.95 16 B 5|14:56 19.91 50 S 6|14:56 19.94 27  6|14:56 19.92 18 S 4|15:00 20.10 2136  105`;
document.getElementById('ticks').innerHTML = '<colgroup><col style="width:80px"><col style="width:88px"><col style="width:99px"><col style="width:44px"><col></colgroup>' + T.split('|').map(r => {
  const [t, p, v, d, n] = r.split(' ');
  return `<tr><td>${t}</td><td class="r">${p}</td><td class="${v > 999 ? 'm' : 'y'}">${v}</td><td class="${d === 'S' ? 'g' : 'r'}">${d}</td><td class="w">${n}</td></tr>`;
}).join('');

document.getElementById('status').innerHTML = [['上证', '3197.90', '-42.46', '-1.31%', '4062'], ['沪深', '3864.03', '-60.21', '-1.53%', '2436'], ['创业', '2211.84', '-59.58', '-2.62%', '2900']].map(([n, i, c, p, a]) =>
  `<span class="n">${n}</span><span class="i up2">${i}</span><span class="c up2">${c}</span><span class="p up2">${p}</span><span class="a">${a}<span>亿</span></span>`).join('') +
  '<svg width="153" height="22" viewBox="0 0 153 22"><rect x="1" y="1" width="73" height="11" fill="#101010" stroke="#fff" stroke-width="2"/><rect x="79" y="1" width="73" height="11" fill="#101010" stroke="#fff" stroke-width="2"/><rect x="26" y="3" width="10" height="7" fill="#f00"/><rect x="37" y="3" width="18" height="7" fill="#00a030"/><rect x="105" y="3" width="10" height="7" fill="#f00"/><rect x="116" y="3" width="16" height="7" fill="#00a030"/><path d="M1 17H152" stroke="#00a030" stroke-width="6" stroke-dasharray="11 2"/></svg><span class="host">广州云主站Z25</span>';

drawMain(); drawVol(); drawMacd(); drawXg(); drawTime();
```
